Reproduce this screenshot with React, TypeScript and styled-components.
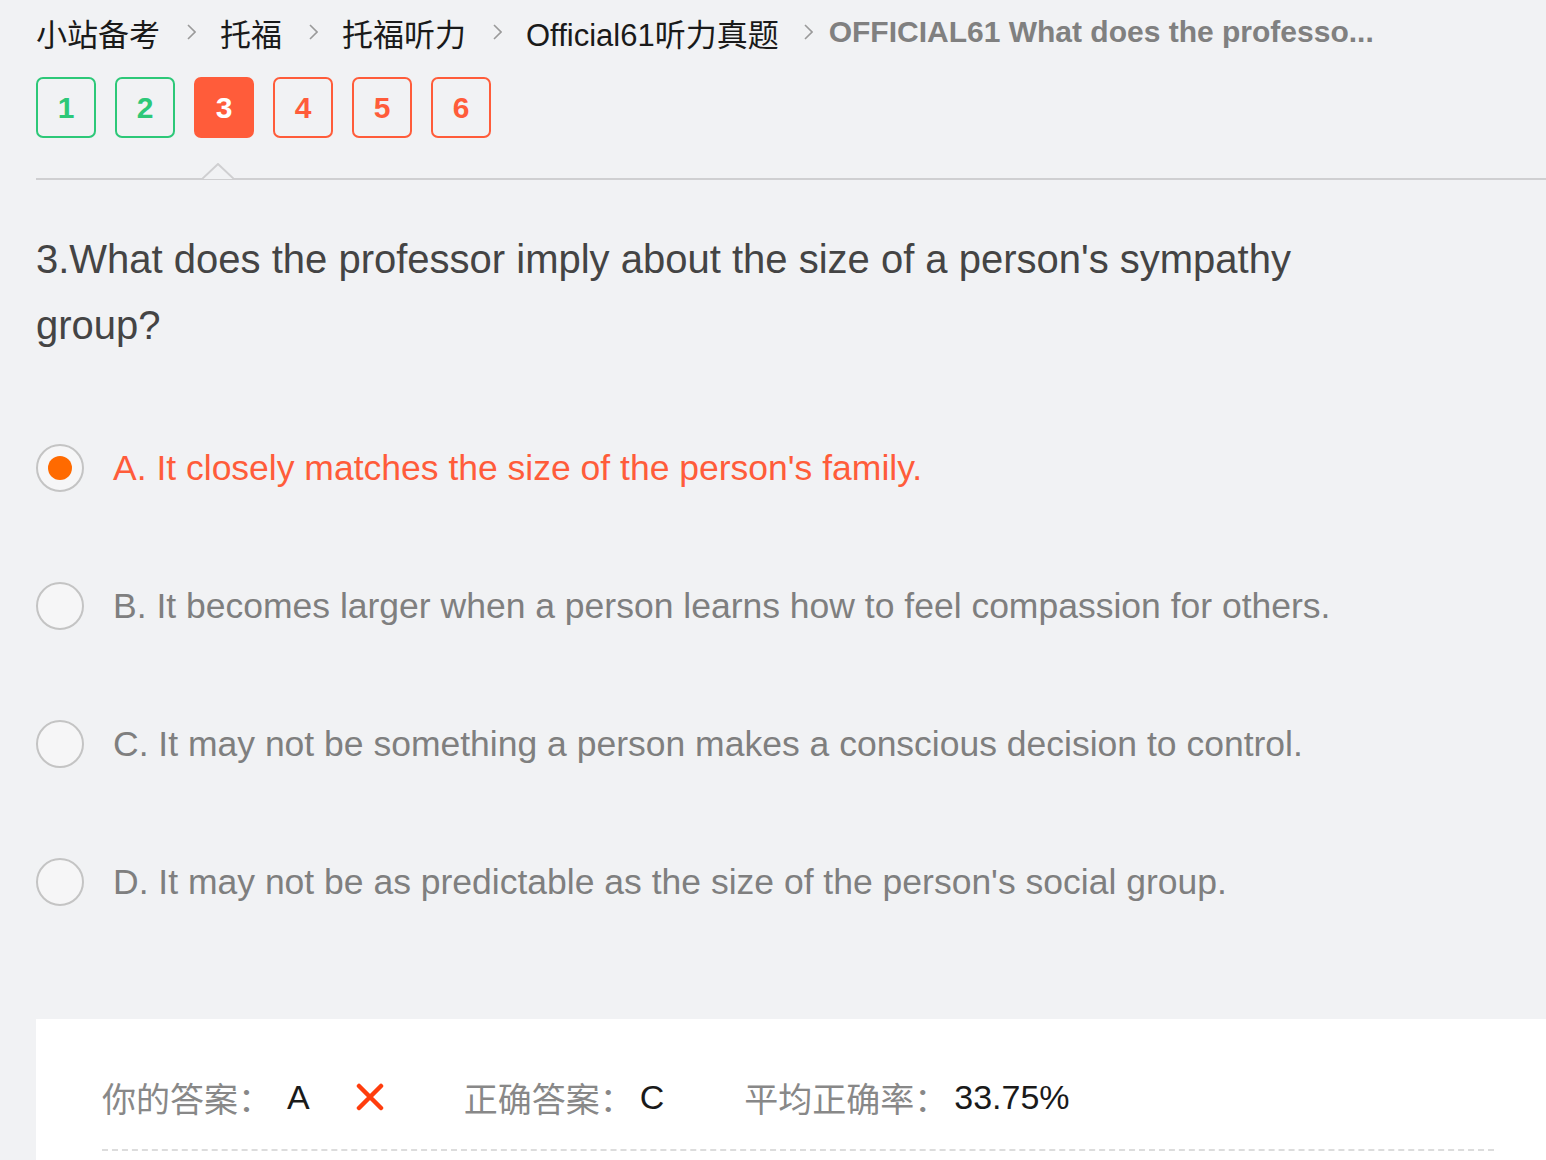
import React from "react";
import styled, { createGlobalStyle } from "styled-components";

const GlobalStyle = createGlobalStyle`
  html, body { margin: 0; padding: 0; background: #f1f2f4; }
  body { font-family: "Liberation Sans", Arial, "Noto Sans CJK SC", sans-serif; }
`;

const Page = styled.div`
  padding-left: 36px;
  height: 1160px;
  overflow: hidden;
  box-sizing: border-box;
`;

const Breadcrumb = styled.nav`
  display: flex;
  align-items: center;
  height: 64px;
  font-size: 31px;
  white-space: nowrap;
`;

const Crumb = styled.span<{ $last?: boolean }>`
  color: ${(p) => (p.$last ? "#808080" : "#1a1a1a")};
  font-weight: ${(p) => (p.$last ? 700 : 400)};
  font-size: ${(p) => (p.$last ? "30px" : "31px")};
`;

const Sep = styled.span<{ $tight?: boolean }>`
  display: inline-flex;
  margin: ${(p) => (p.$tight ? "0 16px 0 25px" : "0 24px 0 27px")};
`;

const NumRow = styled.div`
  display: flex;
  gap: 19px;
  margin-top: 13px;
`;

const NumBox = styled.div<{ $state: "right" | "wrong" | "current" }>`
  width: 60px;
  height: 61px;
  box-sizing: border-box;
  border-radius: 7px;
  border: 2px solid ${(p) => (p.$state === "right" ? "#2dc878" : "#ff5c3a")};
  background: ${(p) => (p.$state === "current" ? "#ff5c3a" : "transparent")};
  color: ${(p) =>
    p.$state === "current" ? "#fff" : p.$state === "right" ? "#2dc878" : "#ff5c3a"};
  font-weight: 700;
  font-size: 30px;
  display: flex;
  align-items: center;
  justify-content: center;
`;

const Divider = styled.div`
  position: relative;
  margin-top: 40px;
  height: 2px;
  background: #cfcfd1;
`;

const Pointer = styled.svg`
  position: absolute;
  left: 166px;
  top: -15px;
`;

const Question = styled.h2`
  margin: 46px 0 0;
  font-weight: 400;
  font-size: 40px;
  line-height: 66px;
  color: #444;
  max-width: 1300px;
`;

const Options = styled.div`
  display: flex;
  flex-direction: column;
  margin-top: 41px;
`;

const Option = styled.div<{ $selected?: boolean }>`
  display: flex;
  align-items: center;
  height: 138px;
  font-size: 35.5px;
  color: ${(p) => (p.$selected ? "#ff5c3a" : "#7f7f7f")};
`;

const Radio = styled.span<{ $selected?: boolean }>`
  width: 48px;
  height: 48px;
  box-sizing: border-box;
  border-radius: 50%;
  border: 2px solid #c4c4c4;
  background: #f6f6f7;
  margin-right: 29px;
  flex-shrink: 0;
  display: flex;
  align-items: center;
  justify-content: center;
  &::after {
    content: "";
    width: 24px;
    height: 24px;
    border-radius: 50%;
    background: #ff6a00;
    display: ${(p) => (p.$selected ? "block" : "none")};
  }
`;

const ResultPanel = styled.div`
  margin-top: 68px;
  background: #fff;
  padding: 56px 52px 0 66px;
  height: 141px;
  box-sizing: border-box;
`;

const ResultRow = styled.div`
  display: flex;
  align-items: center;
  font-size: 34px;
  height: 44px;
  padding-bottom: 30px;
  border-bottom: 2px dashed #dcdcdc;
`;

const Label = styled.span`
  color: #888;
  font-family: "Noto Sans CJK SC", sans-serif;
  font-weight: 400;
`;

const Value = styled.span<{ $before?: number; $after?: number }>`
  color: #1a1a1a;
  margin-left: ${(p) => p.$before ?? 6}px;
  margin-right: ${(p) => p.$after ?? 0}px;
`;

const Cross = styled.svg`
  margin-right: 80px;
`;

const Chevron = () => (
  <svg width="9" height="16" viewBox="0 0 9 16">
    <polyline points="1,1 8,8 1,15" fill="none" stroke="#9a9a9a" strokeWidth="1.6" />
  </svg>
);

export default function App() {
  const crumbs = ["小站备考", "托福", "托福听力", "Official61听力真题"];
  const nums: Array<"right" | "wrong" | "current"> = ["right", "right", "current", "wrong", "wrong", "wrong"];
  const options = [
    "A. It closely matches the size of the person's family.",
    "B. It becomes larger when a person learns how to feel compassion for others.",
    "C. It may not be something a person makes a conscious decision to control.",
    "D. It may not be as predictable as the size of the person's social group.",
  ];
  return (
    <>
      <GlobalStyle />
      <Page>
        <Breadcrumb>
          {crumbs.map((c, i) => (
            <React.Fragment key={c}>
              <Crumb>{c}</Crumb>
              <Sep $tight={i === crumbs.length - 1}>
                <Chevron />
              </Sep>
            </React.Fragment>
          ))}
          <Crumb $last>OFFICIAL61 What does the professo...</Crumb>
        </Breadcrumb>
        <NumRow>
          {nums.map((s, i) => (
            <NumBox key={i} $state={s}>
              {i + 1}
            </NumBox>
          ))}
        </NumRow>
        <Divider>
          <Pointer width="32" height="17" viewBox="0 0 32 17">
            <polygon points="0,16 16,1 32,16" fill="#f1f2f4" />
            <polyline points="0,16 16,1 32,16" fill="none" stroke="#cfcfd1" strokeWidth="2" />
          </Pointer>
        </Divider>
        <Question>3.What does the professor imply about the size of a person's sympathy group?</Question>
        <Options>
          {options.map((o, i) => (
            <Option key={o} $selected={i === 0}>
              <Radio $selected={i === 0} />
              {o}
            </Option>
          ))}
        </Options>
        <ResultPanel>
          <ResultRow>
            <Label>你的答案：</Label>
            <Value $before={15} $after={46}>A</Value>
            <Cross width="28" height="28" viewBox="0 0 28 28">
              <path d="M3 3 L25 25 M25 3 L3 25" stroke="#ff3d0d" strokeWidth="4.5" strokeLinecap="round" />
            </Cross>
            <Label>正确答案：</Label>
            <Value $after={80}>C</Value>
            <Label>平均正确率：</Label>
            <Value>33.75%</Value>
          </ResultRow>
        </ResultPanel>
      </Page>
    </>
  );
}
